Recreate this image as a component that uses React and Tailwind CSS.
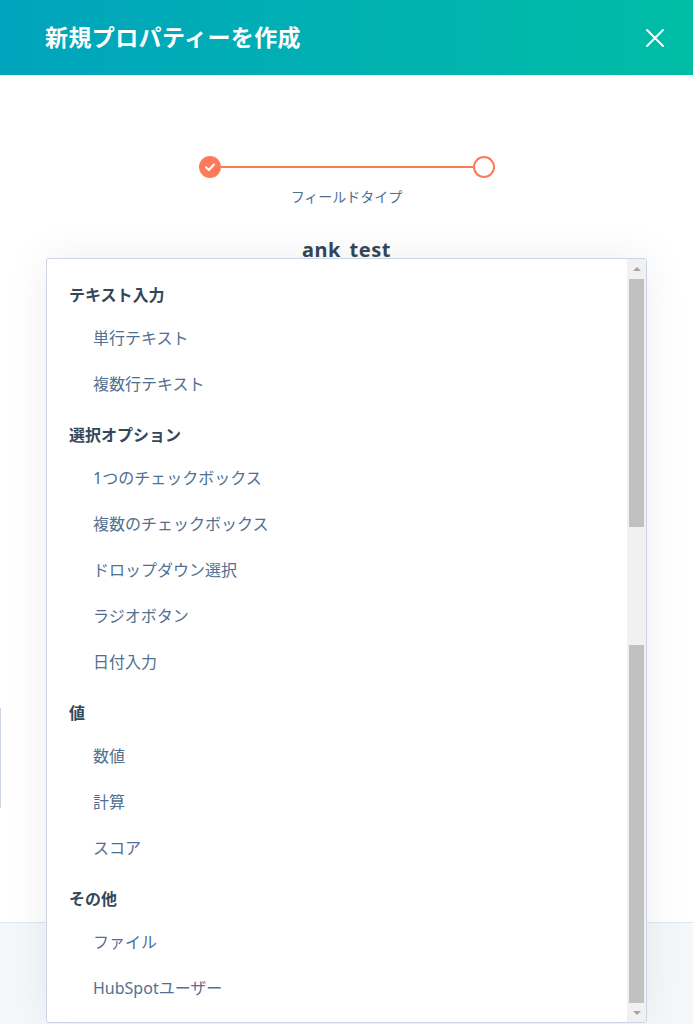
import React from 'react';

const font = { fontFamily: '"Noto Sans", "Noto Sans CJK JP", sans-serif' };

const groups = [
  { title: 'テキスト入力', items: ['単行テキスト', '複数行テキスト'] },
  {
    title: '選択オプション',
    items: ['1つのチェックボックス', '複数のチェックボックス', 'ドロップダウン選択', 'ラジオボタン', '日付入力'],
  },
  { title: '値', items: ['数値', '計算', 'スコア'] },
  { title: 'その他', items: ['ファイル', 'HubSpotユーザー'] },
];

const App = () => {
  return (
    <div className="relative h-[1024px] w-[693px] overflow-hidden bg-white flex flex-col" style={font}>
      {/* Header */}
      <div className="h-[75px] shrink-0 bg-gradient-to-r from-[#00a4bd] to-[#00bda5] flex items-center justify-between pl-[45px] pr-[28px]">
        <h1 className="text-white text-[23px] font-bold tracking-[0.4px]">新規プロパティーを作成</h1>
        <svg width="20" height="20" viewBox="0 0 20 20" className="text-white">
          <path d="M2 2 L18 18 M18 2 L2 18" stroke="currentColor" strokeWidth="2" strokeLinecap="round" />
        </svg>
      </div>

      {/* Body */}
      <div className="flex-1 flex flex-col items-center pt-[81px]">
        <div className="flex items-center">
          <div className="w-[22px] h-[22px] rounded-full bg-[#ff7a59] flex items-center justify-center">
            <svg width="12" height="12" viewBox="0 0 12 12">
              <path d="M2 6.3 L4.8 9 L10 3.5" stroke="white" strokeWidth="2" fill="none" strokeLinecap="round" strokeLinejoin="round" />
            </svg>
          </div>
          <div className="w-[252px] h-[2px] bg-[#ff7a59]" />
          <div className="w-[22px] h-[22px] rounded-full border-2 border-[#ff7a59] bg-white" />
        </div>
        <p className="mt-[9px] text-[14px] text-[#516f90] leading-[20px]">フィールドタイプ</p>
        <p className="mt-[30px] text-[20px] font-bold text-[#33475b] leading-[26px] tracking-[0.5px]">ank_test</p>
        <div className="self-start mt-[445px] w-[1px] h-[100px] bg-[#cbd6e2]" />
      </div>

      {/* Footer */}
      <div className="h-[102px] shrink-0 bg-[#f5f8fa] border-t border-[#dfe3eb]" />

      {/* Dropdown */}
      <div className="absolute left-[46px] top-[258px] w-[601px] h-[765px] bg-white border border-[#cbd6e2] rounded-[3px] shadow-[0_0_45px_rgba(0,0,0,0.07)] flex overflow-hidden">
        <div className="flex-1 pt-[8px]">
          {groups.map((g) => (
            <div key={g.title}>
              <div className="pt-[18px] pb-[10px] pl-[22px] text-[16px] leading-[20px] font-bold text-[#33475b]">
                {g.title}
              </div>
              {g.items.map((it) => (
                <div key={it} className="h-[46px] flex items-center pl-[46px] text-[16px] text-[#516f90]">
                  {it}
                </div>
              ))}
            </div>
          ))}
        </div>
        {/* Scrollbar */}
        <div className="w-[19px] bg-[#f1f1f1] flex flex-col items-center">
          <div className="h-[20px] flex items-center justify-center">
            <div className="w-0 h-0 border-l-[4px] border-r-[4px] border-b-[4px] border-l-transparent border-r-transparent border-b-[#a3a3a3]" />
          </div>
          <div className="w-[15px] h-[248px] bg-[#c1c1c1]" />
          <div className="h-[118px]" />
          <div className="w-[15px] h-[358px] bg-[#c1c1c1]" />
          <div className="h-[19px] flex items-center justify-center">
            <div className="w-0 h-0 border-l-[4px] border-r-[4px] border-t-[4px] border-l-transparent border-r-transparent border-t-[#a3a3a3]" />
          </div>
        </div>
      </div>
    </div>
  );
};

export default App;
